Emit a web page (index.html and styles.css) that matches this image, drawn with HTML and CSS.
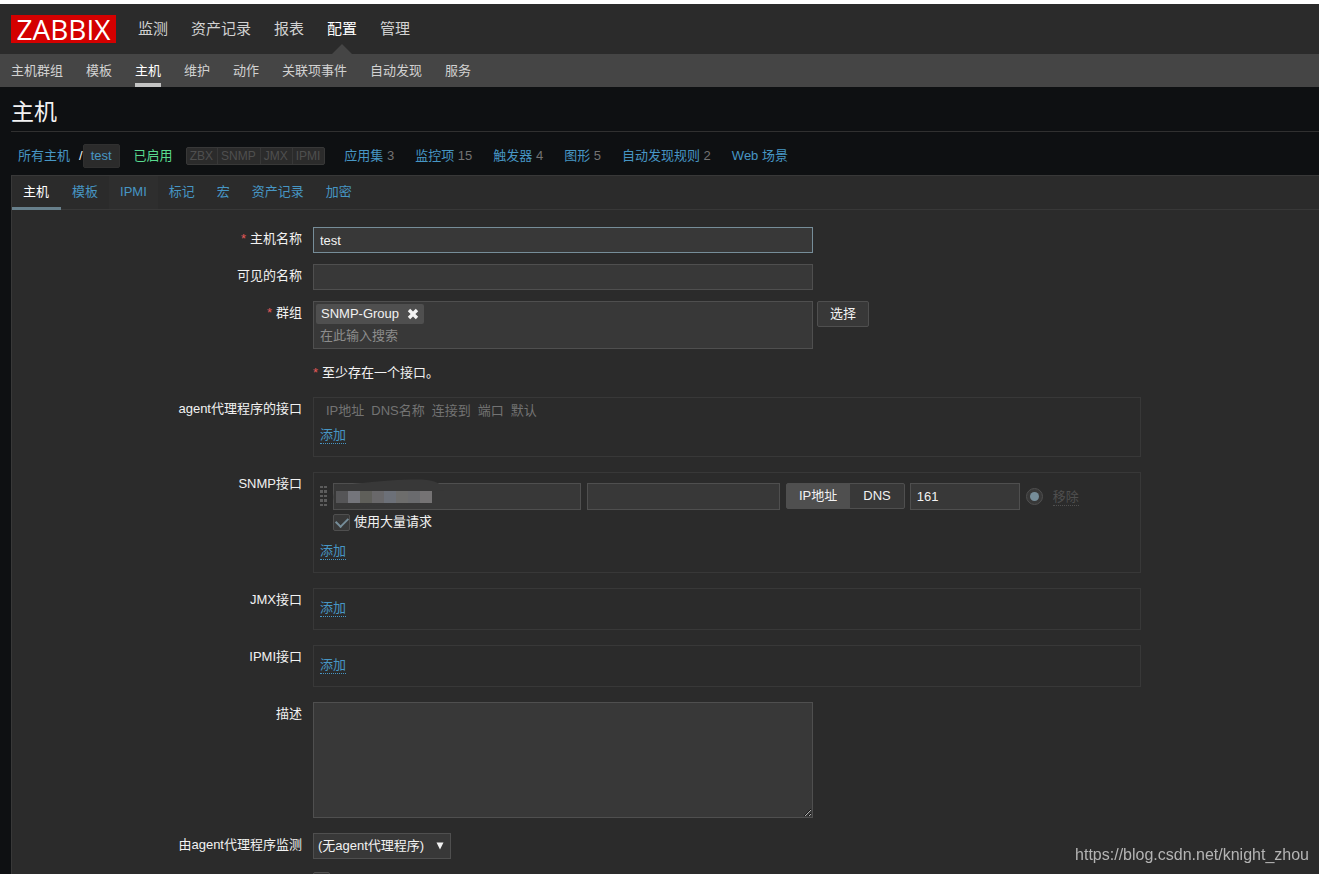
FILE: index.html
```html
<!DOCTYPE html>
<html lang="zh-CN">
<head>
<meta charset="utf-8">
<title>主机</title>
<link rel="stylesheet" href="styles.css">
</head>
<body>
<header class="top">
  <a class="logo" href="#">ZABBIX</a>
  <nav class="main-nav">
    <a href="#">监测</a>
    <a href="#">资产记录</a>
    <a href="#">报表</a>
    <a href="#" class="current">配置</a>
    <a href="#">管理</a>
  </nav>
</header>
<nav class="sub-nav">
  <a href="#">主机群组</a>
  <a href="#">模板</a>
  <a href="#" class="current">主机</a>
  <a href="#">维护</a>
  <a href="#">动作</a>
  <a href="#">关联项事件</a>
  <a href="#">自动发现</a>
  <a href="#">服务</a>
</nav>
<main class="page">
  <h1 class="title">主机</h1>
  <div class="crumbs">
    <a href="#">所有主机</a>
    <span class="slash">/</span>
    <a href="#" class="chip">test</a>
    <span class="enabled">已启用</span>
    <div class="statuses"><span>ZBX</span><span>SNMP</span><span>JMX</span><span>IPMI</span></div>
    <div class="links">
      <span><a href="#">应用集</a> 3</span>
      <span><a href="#">监控项</a> 15</span>
      <span><a href="#">触发器</a> 4</span>
      <span><a href="#">图形</a> 5</span>
      <span><a href="#">自动发现规则</a> 2</span>
      <span><a href="#">Web 场景</a></span>
    </div>
  </div>
  <section class="panel">
    <nav class="tabs">
      <a href="#" class="active">主机</a>
      <a href="#">模板</a>
      <a href="#" class="hovered">IPMI</a>
      <a href="#">标记</a>
      <a href="#">宏</a>
      <a href="#">资产记录</a>
      <a href="#">加密</a>
    </nav>
    <form class="form">
      <div class="row tight">
        <label class="label required" for="host">主机名称</label>
        <input class="field wide focused" id="host" type="text" value="test" autofocus>
      </div>
      <div class="row tight">
        <label class="label" for="visible">可见的名称</label>
        <input class="field wide" id="visible" type="text">
      </div>
      <div class="row">
        <label class="label required" for="groups">群组</label>
        <div class="group-line">
          <div class="multi">
            <span class="tag">SNMP-Group
              <button type="button" class="remove" aria-label="SNMP-Group">
                <svg width="12" height="12" viewBox="0 0 12 12"><path d="M3.2 0.8 6 3.6 8.8 0.8 11.2 3.2 8.4 6 11.2 8.8 8.8 11.2 6 8.4 3.2 11.2 0.8 8.8 3.6 6 0.8 3.2Z" fill="#f2f2f2"/></svg>
              </button>
            </span>
            <input id="groups" type="text" placeholder="在此输入搜索">
          </div>
          <button type="button" class="button">选择</button>
        </div>
      </div>
      <div class="row">
        <span></span>
        <p class="note required">至少存在一个接口。</p>
      </div>
      <div class="row">
        <span class="label">agent代理程序的接口</span>
        <div class="box agent">
          <div class="columns"><span>IP地址</span><span>DNS名称</span><span>连接到</span><span>端口</span><span>默认</span></div>
          <button type="button" class="link">添加</button>
        </div>
      </div>
      <div class="row">
        <span class="label">SNMP接口</span>
        <div class="box">
          <div class="iface">
            <svg class="grip" width="8" height="21" viewBox="0 0 8 21" fill="#5c5c5c">
              <path d="M0 0h3v2H0zM4 0h3v2H4zM0 4h3v3H0zM4 4h3v3H4zM0 9h3v2H0zM4 9h3v2H4zM0 13h3v3H0zM4 13h3v3H4zM0 18h3v2H0zM4 18h3v2H4z"/>
            </svg>
            <div class="ip-wrap">
              <input class="field ip" type="text" aria-label="IP地址">
              <svg class="smear" width="118" height="30" viewBox="0 0 118 30">
                <path d="M3 7C30 4 55 1 80 0.500C98 0 109 2 112 11L96 13V24C60 27 35 26 6 29Q3 29 3 24Q0 18 3 12Z" fill="#383838"/>
                <path d="M4 12h12v12H4z" fill="#555557"/>
                <path d="M16 12h12v12H16z" fill="#74757b"/>
                <path d="M28 12h12v12H28z" fill="#5f5f5a"/>
                <path d="M40 12h12v12H40z" fill="#69686a"/>
                <path d="M52 12h12v12H52z" fill="#6c7078"/>
                <path d="M64 12h12v12H64z" fill="#6d6d6c"/>
                <path d="M76 12h12v12H76z" fill="#6a6b6e"/>
                <path d="M88 12h12v12H88z" fill="#757374"/>
              </svg>
            </div>
            <input class="field dns" type="text" aria-label="DNS名称">
            <div class="toggle"><button type="button" class="on">IP地址</button><button type="button">DNS</button></div>
            <input class="field port" type="text" value="161" aria-label="端口">
            <input class="radio" type="radio" checked aria-label="默认">
            <button type="button" class="link off" disabled>移除</button>
          </div>
          <div class="bulk">
            <input class="check" type="checkbox" id="bulk" checked>
            <label for="bulk">使用大量请求</label>
          </div>
          <button type="button" class="link">添加</button>
        </div>
      </div>
      <div class="row">
        <span class="label">JMX接口</span>
        <div class="box"><button type="button" class="link">添加</button></div>
      </div>
      <div class="row">
        <span class="label">IPMI接口</span>
        <div class="box"><button type="button" class="link">添加</button></div>
      </div>
      <div class="row">
        <label class="label" for="desc">描述</label>
        <textarea class="field area" id="desc"></textarea>
      </div>
      <div class="row last">
        <label class="label" for="proxy">由agent代理程序监测</label>
        <div class="select-wrap">
          <select class="field select" id="proxy"><option>(无agent代理程序)</option></select>
          <svg class="arrow" width="8" height="8" viewBox="0 0 8 8"><path d="M0.500 0.500h7L4 7.500z" fill="#f2f2f2"/></svg>
        </div>
      </div>
      <div class="row">
        <span></span>
        <input class="check" type="checkbox" checked aria-label="已启用">
      </div>
    </form>
  </section>
</main>
<div class="watermark">https://blog.csdn.net/knight_zhou</div>
</body>
</html>
```
FILE: styles.css
```css
* { box-sizing: border-box; }
html { background: #0e1012; scrollbar-width: none; }
body {
  margin: 0;
  border-top: 4px solid #fff;
  color: #f2f2f2;
  font: 13px/18px "Liberation Sans", "Noto Sans CJK SC", sans-serif;
}
a { color: #4796c4; text-decoration: none; }
button, input, select, textarea { font: inherit; color: inherit; margin: 0; }
button { cursor: pointer; }

.top { display: flex; align-items: center; gap: 22px; height: 50px; padding: 0 11px; background: #2b2b2b; }
.logo { width: 105px; height: 28px; background: #d40000; color: #fff; font-family: "Open Sans", sans-serif; font-size: 28px; line-height: 28px; text-align: center; }
.main-nav { display: flex; gap: 23px; align-self: stretch; font-size: 15px; line-height: 49px; }
.main-nav a { color: #d2d2d2; }
.main-nav .current { position: relative; color: #fff; }
.main-nav .current::after {
  content: ""; position: absolute; bottom: 0; left: 5px;
  border: 10px solid transparent; border-top: 0; border-bottom-color: #454545;
}
.sub-nav { display: flex; gap: 23px; height: 33px; padding: 0 11px; background: #454545; line-height: 33px; }
.sub-nav a { color: #d2d2d2; }
.sub-nav .current { color: #fff; border-bottom: 4px solid #c4c4c4; }

.page { padding-left: 11px; }
.title { margin: 0; height: 45px; border-bottom: 1px solid #303030; font-size: 23px; font-weight: 400; line-height: 51px; }
.crumbs { display: flex; align-items: center; height: 43px; padding: 5px 7px 0; }
.slash { margin-left: 9px; }
.chip { padding: 2px 7px; border: 1px solid #303030; border-radius: 2px; background: #2b2b2b; }
.enabled { margin: 0 13px 0 14px; color: #59db8f; }
.statuses { display: flex; border: 1px solid #383838; border-radius: 2px; background: #2b2b2b; color: #4f4f4f; font-size: 12px; line-height: 16px; }
.statuses span { padding: 0 4px 0 3px; }
.statuses span + span { border-left: 1px solid #383838; }
.links { display: flex; gap: 21px; margin-left: 19px; color: #737373; }

.panel { border: 1px solid #383838; border-right: 0; border-bottom: 0; background: #2b2b2b; }
.tabs { display: flex; height: 34px; border-bottom: 1px solid #383838; line-height: 32px; }
.tabs a { padding: 0 11px; height: 34px; }
.tabs .active { padding-right: 12px; color: #fff; border-bottom: 3px solid #68808c; }
.tabs .hovered { background: #2e2e2e; height: 33px; }

.form { padding-top: 17px; }
.row { display: grid; grid-template-columns: 290px 1fr; column-gap: 11px; justify-items: start; align-items: start; margin-bottom: 15px; }
.row.tight { margin-bottom: 11px; }
.row.last { margin-bottom: 13px; }
.label { justify-self: end; line-height: 24px; }
.required::before { content: "*"; color: #e45959; margin-right: 4px; }
.note { margin: 0; line-height: 18px; }

.field { height: 26px; padding: 0 6px; border: 1px solid #4f4f4f; border-radius: 0; background: #383838; outline: 0; }
.wide { width: 500px; }
.focused { border-color: #768d99; }
.group-line { display: flex; gap: 4px; align-items: flex-start; }
.multi { width: 500px; height: 48px; padding: 2px; border: 1px solid #4f4f4f; background: #383838; }
.tag { display: flex; width: max-content; align-items: center; gap: 8px; height: 20px; padding: 0 5px; border-radius: 2px; background: #4f4f4f; }
.remove { display: flex; padding: 0; border: 0; background: none; }
.multi input { display: block; width: 100%; height: 23px; padding: 0 4px; border: 0; background: none; outline: 0; }
.multi input::placeholder { color: #8c8c8c; }
.button { height: 26px; padding: 0 12px; border: 1px solid #4f4f4f; border-radius: 2px; background: #383838; }

.box { width: 828px; padding: 10px 6px 12px; border: 1px solid #383838; }
.columns { display: flex; gap: 7px; padding: 0 6px; color: #737373; }
.link { display: block; padding: 0; border: 0; border-bottom: 1px dotted #4796c4; background: none; color: #4796c4; line-height: 17px; }
.box.agent { padding: 4px 6px 12px; }
.agent .link { margin-top: 6px; }
.off { color: #4f4f4f; border-color: #4f4f4f; margin-left: 10px; }
.iface { display: flex; align-items: center; }
.iface .field { height: 27px; }
.grip { margin-right: 5px; }
.ip-wrap { position: relative; display: flex; width: 248px; }
.ip { width: 100%; }
.smear { position: absolute; left: -1px; top: -4px; }
.dns { width: 193px; margin: 0 6px; }
.toggle { display: flex; align-self: flex-start; margin-right: 5px; border: 1px solid #4f4f4f; border-radius: 2px; background: #383838; }
.toggle button { height: 24px; padding: 0 13px; border: 0; background: none; }
.toggle button:first-child { padding: 0 13px 0 12px; }
.toggle .on { background: #4f4f4f; }
.port { width: 110px; }
.radio, .check { display: grid; place-items: center; appearance: none; width: 17px; height: 17px; border: 1px solid #4f4f4f; border-radius: 2px; background: #383838; }
.radio { margin-left: 6px; border-radius: 50%; }
.radio::before { content: ""; width: 9px; height: 9px; border-radius: 50%; background: #768d99; }
.check::before { content: ""; width: 6px; height: 10px; margin-bottom: 3px; border: solid #768d99; border-width: 0 2px 2px 0; transform: rotate(45deg); }
.bulk { display: flex; align-items: center; gap: 4px; margin: 3px 0 11px 13px; }
.area { width: 500px; height: 116px; display: block; resize: both; }
.select-wrap { position: relative; }
.select { appearance: none; width: 138px; padding: 0 4px; }
.arrow { position: absolute; right: 7px; top: 9px; pointer-events: none; }
.watermark { position: fixed; right: 10px; bottom: 10px; color: #b4b4b4; font-size: 16px; }
```
